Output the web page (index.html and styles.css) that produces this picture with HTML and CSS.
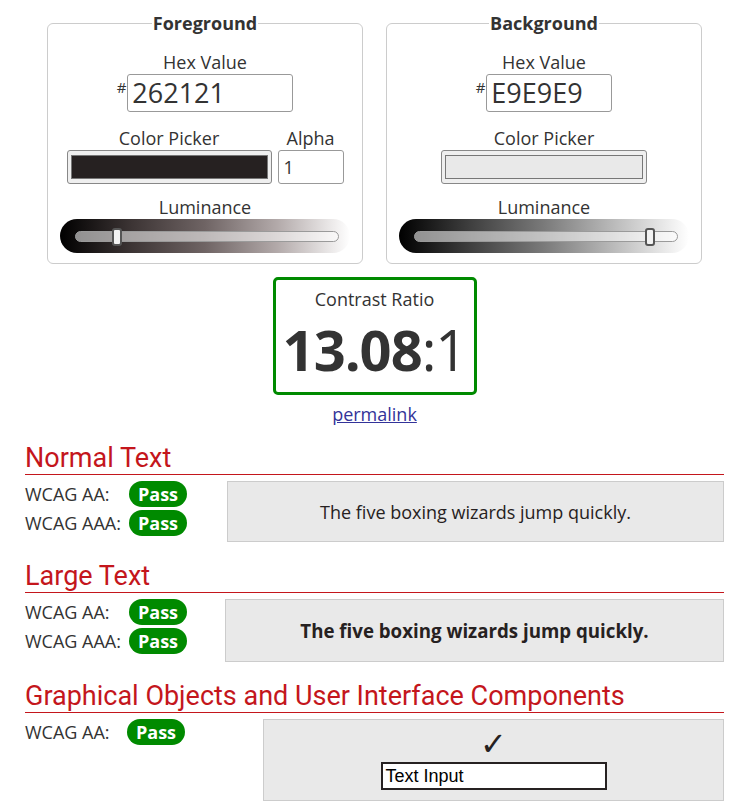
FILE: index.html
```html
<!DOCTYPE html>
<html>
<head>
<meta charset="utf-8">
<link rel="stylesheet" href="styles.css">
</head>
<body>
<div class="page">
  <div class="pickers">
    <fieldset class="picker">
      <legend>Foreground</legend>
      <div class="field">
        <div class="label">Hex Value</div>
        <div class="hexrow"><span class="hash">#</span><div class="hex hex-fg">262121</div></div>
      </div>
      <div class="pickrow">
        <div class="field">
          <div class="label">Color Picker</div>
          <div class="swatch"><div class="swatch-in" style="background:#262121"></div></div>
        </div>
        <div class="field">
          <div class="label">Alpha</div>
          <div class="alpha">1</div>
        </div>
      </div>
      <div class="field lum-field">
        <div class="label lum-label">Luminance</div>
        <div class="lum lum-fg">
          <div class="track"></div>
          <div class="thumb" style="left:52px"></div>
        </div>
      </div>
    </fieldset>
    <fieldset class="picker">
      <legend>Background</legend>
      <div class="field">
        <div class="label">Hex Value</div>
        <div class="hexrow"><span class="hash">#</span><div class="hex hex-bg">E9E9E9</div></div>
      </div>
      <div class="pickrow">
        <div class="field">
          <div class="label">Color Picker</div>
          <div class="swatch swatch-bg"><div class="swatch-in" style="background:#e9e9e9"></div></div>
        </div>
      </div>
      <div class="field lum-field">
        <div class="label lum-label">Luminance</div>
        <div class="lum lum-bg">
          <div class="track"></div>
          <div class="thumb" style="left:246px"></div>
        </div>
      </div>
    </fieldset>
  </div>

  <div class="ratio-wrap">
    <div class="ratio">
      <div class="ratio-label">Contrast Ratio</div>
      <div class="ratio-value"><b>13.08</b>:1</div>
    </div>
    <a class="permalink" href="#">permalink</a>
  </div>

  <h2 class="section-title">Normal Text</h2>
  <div class="results">
    <div class="crit">WCAG AA:</div><div class="pass">Pass</div>
    <div class="sample sample-normal">The five boxing wizards jump quickly.</div>
    <div class="crit">WCAG AAA:</div><div class="pass">Pass</div>
  </div>

  <h2 class="section-title">Large Text</h2>
  <div class="results results-large">
    <div class="crit">WCAG AA:</div><div class="pass">Pass</div>
    <div class="sample sample-large">The five boxing wizards jump quickly.</div>
    <div class="crit">WCAG AAA:</div><div class="pass">Pass</div>
  </div>

  <h2 class="section-title">Graphical Objects and User Interface Components</h2>
  <div class="results results-ui">
    <div class="crit">WCAG AA:</div><div class="pass">Pass</div>
    <div class="sample sample-ui">
      <div class="check">&#10003;</div>
      <div class="textinput">Text Input</div>
    </div>
  </div>
</div>
</body>
</html>
```
FILE: styles.css
```css
html, body {
  margin: 0;
  padding: 0;
  background: #fff;
}
body {
  font-family: "Open Sans", sans-serif;
  color: #333;
  font-size: 18px;
}
.page {
  width: 699px;
  margin-left: 25px;
  padding-top: 14px;
  padding-bottom: 9px;
}
.pickers {
  display: flex;
  justify-content: center;
  gap: 23px;
}
.picker {
  width: 316px;
  box-sizing: border-box;
  margin: 0;
  border: 1px solid #ccc;
  border-radius: 6px;
  padding: 17px 0 10px;
  display: flex;
  flex-direction: column;
  align-items: center;
  min-inline-size: 0;
}
.picker legend {
  font-weight: bold;
  font-size: 18px;
  line-height: 19px;
  padding: 0 1px;
  margin: 0 auto;
  color: #333;
}
.field {
  display: flex;
  flex-direction: column;
  align-items: center;
}
.label {
  line-height: 24px;
  height: 24px;
  white-space: nowrap;
}
.hexrow {
  display: flex;
  align-items: flex-start;
}
.hash {
  font-size: 15px;
  line-height: 14px;
  margin-top: 6px;
  margin-right: 1px;
}
.hex {
  height: 38px;
  box-sizing: border-box;
  border: 1px solid #999;
  border-radius: 3px;
  font-size: 27px;
  line-height: 36px;
  padding-left: 4px;
  color: #333;
}
.hex-fg { width: 166px; }
.hex-bg { width: 126px; }
.pickrow {
  display: flex;
  align-items: flex-start;
  gap: 6px;
  margin-top: 14px;
}
.swatch {
  width: 205px;
  height: 34px;
  box-sizing: border-box;
  border: 1px solid #888;
  border-radius: 3px;
  background: #efefef;
  padding: 4px 3px;
}
.swatch-bg { width: 206px; }
.swatch-in {
  height: 100%;
  box-sizing: border-box;
  border: 1px solid #777;
}
.alpha {
  width: 66px;
  height: 34px;
  box-sizing: border-box;
  border: 1px solid #999;
  border-radius: 3px;
  padding-left: 5px;
  line-height: 32px;
  color: #333;
}
.lum-field { margin-top: 12px; }
.lum-label { height: 23px; line-height: 23px; }
.lum {
  position: relative;
  width: 290px;
  height: 34px;
  border-radius: 17px;
}
.lum-fg {
  background: linear-gradient(to right, #000 0%, #3d3535 25%, #6f6464 50%, #b3aaaa 75%, #fff 100%);
}
.lum-bg {
  background: linear-gradient(to right, #000 0%, #404040 25%, #7a7a7a 50%, #bdbdbd 75%, #fff 100%);
}
.track {
  position: absolute;
  left: 15px;
  right: 11px;
  top: 12px;
  height: 11px;
  box-sizing: border-box;
  border: 1px solid #9a9a9a;
  border-radius: 6px;
  background: rgba(255,255,255,0.55);
}
.thumb {
  position: absolute;
  top: 9px;
  width: 10px;
  height: 18px;
  box-sizing: border-box;
  border: 2px solid #555;
  border-radius: 3px;
  background: #f2f2f2;
}
.ratio-wrap {
  display: flex;
  flex-direction: column;
  align-items: center;
  margin-top: 13px;
}
.ratio {
  width: 204px;
  height: 118px;
  box-sizing: border-box;
  border: 3px solid #008a00;
  border-radius: 5px;
  display: flex;
  flex-direction: column;
  align-items: center;
}
.ratio-label {
  margin-top: 7px;
  line-height: 24px;
}
.ratio-value {
  font-size: 56px;
  line-height: 68px;
  margin-top: 4px;
  letter-spacing: -1px;
}
.ratio-value b { font-weight: bold; }
.permalink {
  margin-top: 7px;
  color: #333399;
  line-height: 24px;
}
.section-title {
  font-family: Roboto, sans-serif;
  font-weight: normal;
  font-size: 27px;
  line-height: 32px;
  color: #c4161c;
  margin: 0;
  border-bottom: 1px solid #c4161c;
}
.ratio-wrap + .section-title { margin-top: 16px; }
.results + .section-title { margin-top: 18px; }
.results {
  display: grid;
  grid-template-columns: 104px 58px 1fr;
  grid-template-rows: 26px auto;
  row-gap: 3px;
  margin-top: 6px;
}
.crit {
  line-height: 26px;
  height: 26px;
  white-space: nowrap;
}
.pass {
  background: #008a00;
  color: #fff;
  font-weight: bold;
  border-radius: 13px;
  text-align: center;
  line-height: 26px;
  height: 26px;
}
.sample {
  grid-column: 3;
  grid-row: 1 / span 2;
  margin-left: 40px;
  background: #e9e9e9;
  border: 1px solid #ccc;
  color: #262121;
  display: flex;
  align-items: center;
  justify-content: center;
  height: 61px;
  box-sizing: border-box;
}
.sample-large {
  margin-left: 38px;
  height: 63px;
  font-weight: bold;
  font-size: 18.7px;
}
.results-ui { grid-template-columns: 102px 58px 1fr; }
.sample-ui {
  margin-left: 78px;
  height: 82px;
  flex-direction: column;
  justify-content: flex-start;
}
.check {
  font-family: "DejaVu Sans", sans-serif;
  font-weight: bold;
  font-size: 32px;
  line-height: 36px;
  margin-top: 6px;
  color: #262121;
}
.textinput {
  width: 226px;
  height: 28px;
  box-sizing: border-box;
  border: 2px solid #262121;
  background: #fff;
  font-family: "Liberation Sans", Arial, sans-serif;
  font-size: 18px;
  line-height: 24px;
  padding-left: 3px;
  color: #000;
  margin-top: 0;
}
```
